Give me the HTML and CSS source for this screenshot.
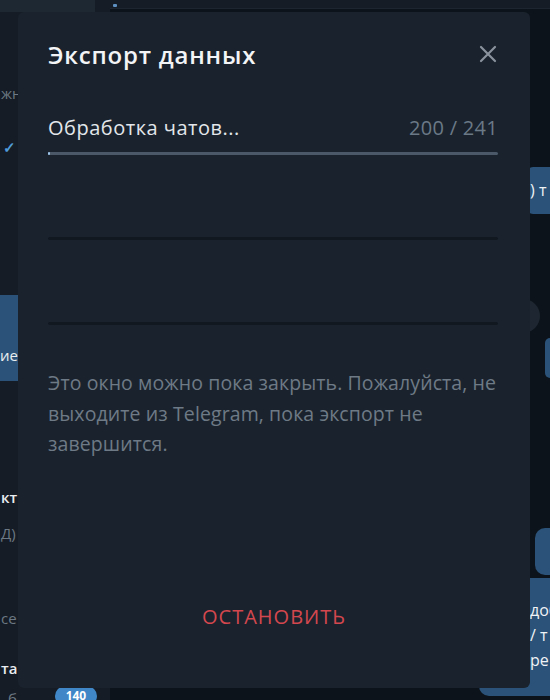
FILE: index.html
```html
<!DOCTYPE html>
<html lang="ru">
<head>
<meta charset="utf-8">
<title>Экспорт данных</title>
<link rel="stylesheet" href="styles.css">
</head>
<body>
<div class="app">
  <aside class="sidebar">
    <div class="search"></div>
    <div class="srow r1 grey">жн</div>
    <div class="srow r2 check">✓</div>
    <div class="selected"><span>ие</span></div>
    <div class="srow r3 white">кт</div>
    <div class="srow r4 grey">Д)</div>
    <div class="srow r5 grey">се</div>
    <div class="srow r6 white">та</div>
    <div class="srow r7"><span class="grey">б</span><span class="badge">140</span></div>
  </aside>
  <main class="chat">
    <div class="chathead"><span class="dot"></span></div>
    <div class="bubble ba">) т</div>
    <div class="scrollbtn"></div>
    <div class="bubble bb"></div>
    <div class="bubble bc"></div>
    <div class="bubble bd"><span>доб</span><span>/ т</span><span>ре</span></div>
  </main>
</div>

<div class="modal">
  <div class="mhead">
    <h1 class="mtitle">Экспорт данных</h1>
    <svg class="close" width="18" height="18" viewBox="0 0 18 18"><path d="M2 2 L16 16 M16 2 L2 16" stroke="#8a939d" stroke-width="2.2" stroke-linecap="round"/></svg>
  </div>
  <div class="prow">
    <div class="plabel"><span class="pname">Обработка чатов...</span><span class="pcount">200 / 241</span></div>
    <div class="pbar active"><div class="pfill"></div></div>
  </div>
  <div class="prow">
    <div class="plabel"></div>
    <div class="pbar empty"></div>
  </div>
  <div class="prow">
    <div class="plabel"></div>
    <div class="pbar empty"></div>
  </div>
  <p class="note">Это окно можно пока закрыть. Пожалуйста, не выходите из Telegram, пока экспорт не завершится.</p>
  <div class="actions"><span class="stop">ОСТАНОВИТЬ</span></div>
</div>
</body>
</html>
```
FILE: styles.css
```css
* { box-sizing: border-box; }
html, body { margin: 0; padding: 0; }
body {
  width: 550px;
  height: 700px;
  overflow: hidden;
  background: #0d131a;
  font-family: "Open Sans", "Noto Sans", sans-serif;
  position: relative;
}
.app {
  display: grid;
  grid-template-columns: 110px 1fr;
  height: 700px;
}
.sidebar {
  background: #151c25;
  display: flex;
  flex-direction: column;
  overflow: hidden;
  font-size: 15px;
}
.search { width: 95px; height: 12px; background: #1e2833; flex: none; }
.srow { height: 20px; line-height: 20px; white-space: nowrap; flex: none; padding-left: 1px; }
.grey { color: #6c7883; }
.white { color: #e9edf0; }
.check { color: #4f9ad8; font-size: 15px; font-weight: 700; padding-left: 3px; }
.r1 { margin-top: 71px; }
.r2 { margin-top: 34px; }
.selected {
  margin-top: 138px;
  height: 86px;
  width: 18px;
  background: #2b5278;
  color: #e9edf0;
  line-height: 20px;
  padding-top: 50px;
  flex: none;
  white-space: nowrap;
  font-size: 15px;
}
.r3 { margin-top: 106px; font-weight: 600; }
.r4 { margin-top: 16px; }
.r5 { margin-top: 65px; }
.r6 { margin-top: 30px; font-weight: 600; }
.r7 { margin-top: 10px; display: flex; gap: 38px; padding-left: 8px; }
.badge {
  background: #3f87c7;
  color: #fff;
  border-radius: 10px;
  height: 20px;
  width: 42px;
  font-size: 12px;
  font-weight: 700;
  text-align: center;
  margin-top: -2px;
}
.chat {
  display: flex;
  flex-direction: column;
  align-items: flex-end;
  overflow: hidden;
  background: #0d131a;
}
.chathead {
  align-self: stretch;
  height: 9px;
  background: #151c25;
  border-bottom: 1px solid #1c2530;
  position: relative;
  flex: none;
}
.dot { position: absolute; left: 3px; top: 4px; width: 4px; height: 3px; background: #5d8fc0; border-radius: 1px; }
.bubble { background: #2b5278; color: #f0f3f6; font-size: 16px; white-space: nowrap; overflow: hidden; flex: none; }
.ba { margin-top: 158px; width: 23px; height: 47px; line-height: 47px; padding-left: 3px; border-radius: 6px 0 0 6px; }
.scrollbtn { margin-top: 85px; margin-right: 10px; width: 34px; height: 34px; border-radius: 50%; background: #1e2731; flex: none; }
.bb { margin-top: 5px; width: 5px; height: 40px; border-radius: 6px 0 0 6px; }
.bc { margin-top: 150px; width: 15px; height: 47px; border-radius: 10px 0 0 10px; }
.bd {
  margin-top: 3px;
  width: 71px;
  height: 118px;
  border-radius: 0 0 0 10px;
  display: flex;
  flex-direction: column;
  padding: 20px 0 0 51px;
  line-height: 25px;
}

.modal {
  position: absolute;
  left: 18px;
  top: 12px;
  width: 512px;
  height: 676px;
  background: #1a232d;
  border-radius: 6px;
  padding: 29px 32px 0 30px;
  display: flex;
  flex-direction: column;
}
.mhead {
  display: flex;
  justify-content: space-between;
  align-items: center;
  height: 28px;
}
.mtitle {
  margin: 0;
  font-size: 24px;
  font-weight: 600;
  letter-spacing: 0.8px;
  color: #f2f4f6;
  line-height: 28px;
}
.close { margin-right: 1px; margin-top: -2px; }
.prow {
  height: 85px;
  display: flex;
  flex-direction: column;
  justify-content: flex-end;
}
.mhead + .prow { height: 86px; }
.plabel {
  display: flex;
  justify-content: space-between;
  font-size: 20px;
  letter-spacing: 0.5px;
  line-height: 26px;
  height: 26px;
  margin-bottom: 11px;
}
.pname { color: #e3e7eb; }
.pcount { color: #6b7987; letter-spacing: 0.3px; }
.pbar { height: 3px; border-radius: 2px; }
.pbar.active { background: #4a5868; }
.pfill { width: 2px; height: 3px; background: #9cc3e8; border-radius: 2px; }
.pbar.empty { background: #111820; }
.note {
  margin: 43px 0 0 0;
  font-size: 19.5px;
  letter-spacing: 0.1px;
  line-height: 30.5px;
  color: #6e7a86;
}
.actions {
  margin-top: 143px;
  text-align: center;
  padding-left: 2px;
  line-height: 27px;
}
.stop {
  color: #d4474e;
  font-size: 20px;
  letter-spacing: 1px;
}
```
